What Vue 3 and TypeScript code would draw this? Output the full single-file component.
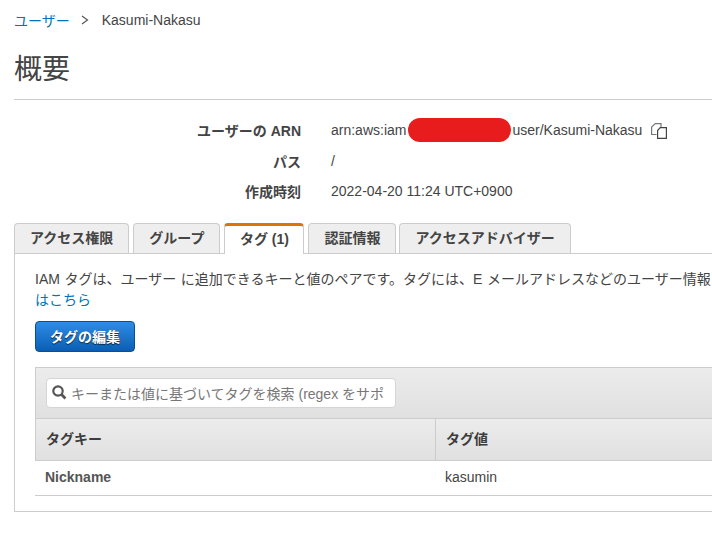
<script setup lang="ts">
interface SummaryRow {
  label: string
  value?: string
}

const rows: SummaryRow[] = [
  { label: "ユーザーの ARN" },
  { label: "パス", value: "/" },
  { label: "作成時刻", value: "2022-04-20 11:24 UTC+0900" },
];

const tabs = ["アクセス権限", "グループ", "タグ (1)", "認証情報", "アクセスアドバイザー"];
const activeTab = "タグ (1)";
</script>

<template>
  <div class="page">
    <nav class="crumbs">
      <a class="link">ユーザー</a>
      <svg class="chevron" width="8" height="10" viewBox="0 0 8 10">
        <path d="M1 1 L6.5 5 L1 9" fill="none" stroke="#555" stroke-width="1.2" />
      </svg>
      <span>Kasumi-Nakasu</span>
    </nav>

    <h1 class="title">概要</h1>

    <dl class="summary">
      <div v-for="row in rows" :key="row.label" class="summary-row">
        <dt>{{ row.label }}</dt>
        <dd v-if="row.value">{{ row.value }}</dd>
        <dd v-else class="arn">
          <span>arn:aws:iam</span>
          <span class="redaction"></span>
          <span>user/Kasumi-Nakasu</span>
          <svg class="copy" width="16" height="16" viewBox="0 0 16 16">
            <path d="M5.5 11.5 H0.6 V4 L4.3 0.6 H10 V4.5" fill="none" stroke="#777" stroke-width="1.2" />
            <path d="M6.6 15.4 V7.5 L9.2 4.6 H15.4 V15.4 Z" fill="#fff" stroke="#444" stroke-width="1.2" />
          </svg>
        </dd>
      </div>
    </dl>

    <ul class="tabs">
      <li v-for="tab in tabs" :key="tab" class="tab" :class="{ active: tab === activeTab }">{{ tab }}</li>
    </ul>

    <section class="panel">
      <p class="intro">IAM タグは、ユーザー に追加できるキーと値のペアです。タグには、E メールアドレスなどのユーザー情報</p>
      <p class="intro"><a class="link">はこちら</a></p>
      <button class="edit" type="button">タグの編集</button>

      <div class="table">
        <div class="filter">
          <label class="search">
            <svg width="16" height="16" viewBox="0 0 16 16">
              <circle cx="6" cy="6" r="4.7" fill="none" stroke="#555" stroke-width="2.2" />
              <path d="M9.3 9.3 L13.4 13.4" stroke="#555" stroke-width="2.8" />
            </svg>
            <span>キーまたは値に基づいてタグを検索 (regex をサポ</span>
          </label>
        </div>
        <div class="head">
          <div class="cell">タグキー</div>
          <div class="cell">タグ値</div>
        </div>
        <div class="row">
          <div class="cell key">Nickname</div>
          <div class="cell">kasumin</div>
        </div>
      </div>
    </section>
  </div>
</template>

<style>
html, body {
  background: #fff;
  overflow: hidden;
}
</style>

<style scoped>
.page {
  width: 712px;
  height: 533px;
  box-sizing: border-box;
  padding: 11px 0 0 14px;
  overflow: hidden;
  font-family: "Liberation Sans", "Noto Sans CJK JP", sans-serif;
  font-size: 14px;
  color: #444;
}

.link {
  color: #0073bb;
}

.crumbs {
  display: flex;
  align-items: center;
  gap: 11px;
  height: 18px;
}

.chevron {
  margin-right: 2px;
}

.title {
  margin: 22px 0 0;
  padding-bottom: 11px;
  border-bottom: 1px solid #ccc;
  font-size: 28px;
  line-height: 37px;
  font-weight: 400;
}

.summary {
  margin: 15px 0 0;
}

.summary-row {
  display: flex;
  height: 30.5px;
  align-items: center;
}

.summary-row dt {
  width: 287px;
  text-align: right;
  font-weight: 700;
}

.summary-row dd {
  margin: 0 0 0 30px;
}

.arn {
  display: flex;
  align-items: center;
}

.redaction {
  width: 103px;
  height: 24px;
  margin: 0 1px 0 2px;
  border-radius: 12px;
  background: #e81c1c;
}

.copy {
  margin: 2px 0 0 9px;
}

.tabs {
  display: flex;
  gap: 4px;
  margin: 16px 0 0;
  padding: 0;
  list-style: none;
  width: 760px;
  height: 31px;
  border-bottom: 1px solid #ccc;
  box-sizing: border-box;
}

.tab {
  height: 30px;
  box-sizing: border-box;
  padding: 0 15px;
  line-height: 28px;
  font-weight: 700;
  background: #eee;
  border: 1px solid #ccc;
  border-bottom: 0;
  border-radius: 4px 4px 0 0;
}

.tab:last-child {
  margin-left: -1px;
}

.tab.active {
  height: 31px;
  padding: 0 14.5px;
  background: #fff;
  border-top: 3px solid #dd7500;
  line-height: 26px;
}

.panel {
  width: 760px;
  box-sizing: border-box;
  height: 258px;
  padding: 15px 0 0 20px;
  border: 1px solid #ccc;
  border-top: 0;
}

.intro {
  margin: 0;
  height: 21px;
  line-height: 21px;
  white-space: nowrap;
  word-spacing: 0.7px;
}

.edit {
  display: block;
  width: 100px;
  height: 31px;
  margin-top: 10px;
  padding: 0;
  font: inherit;
  font-weight: 700;
  color: #fff;
  text-shadow: 0 1px 1px rgba(0, 0, 0, 0.7);
  background: linear-gradient(#2e8ce6, #0a5fb4);
  border: 1px solid #0b4f93;
  border-radius: 4px;
}

.table {
  margin-top: 15px;
}

.filter {
  height: 52px;
  box-sizing: border-box;
  padding: 10px 10px;
  background: linear-gradient(#ececec, #e0e0e0);
  border: 1px solid #ccc;
  border-width: 1px 0 1px 1px;
}

.search {
  display: flex;
  align-items: center;
  gap: 3px;
  width: 350px;
  height: 30px;
  box-sizing: border-box;
  padding-left: 5px;
  background: #fff;
  border: 1px solid #d5d5d5;
  border-radius: 4px;
  color: #777;
  overflow: hidden;
  white-space: nowrap;
}

.head {
  display: grid;
  grid-template-columns: 399px 1fr;
  height: 42px;
  background: linear-gradient(#ececec, #e0e0e0);
  border-left: 1px solid #ccc;
  border-bottom: 1px solid #ccc;
  box-sizing: border-box;
  font-weight: 700;
  align-items: center;
  color: #3c3c3c;
}

.head .cell {
  height: 100%;
  line-height: 41px;
}

.head .cell + .cell {
  border-left: 1px solid #ccc;
}

.row {
  display: grid;
  grid-template-columns: 400px 1fr;
  height: 35px;
  box-sizing: border-box;
  line-height: 32px;
  border-bottom: 1px solid #ccc;
}

.cell {
  padding-left: 10px;
}

.key {
  font-weight: 700;
  color: #555;
}
</style>
